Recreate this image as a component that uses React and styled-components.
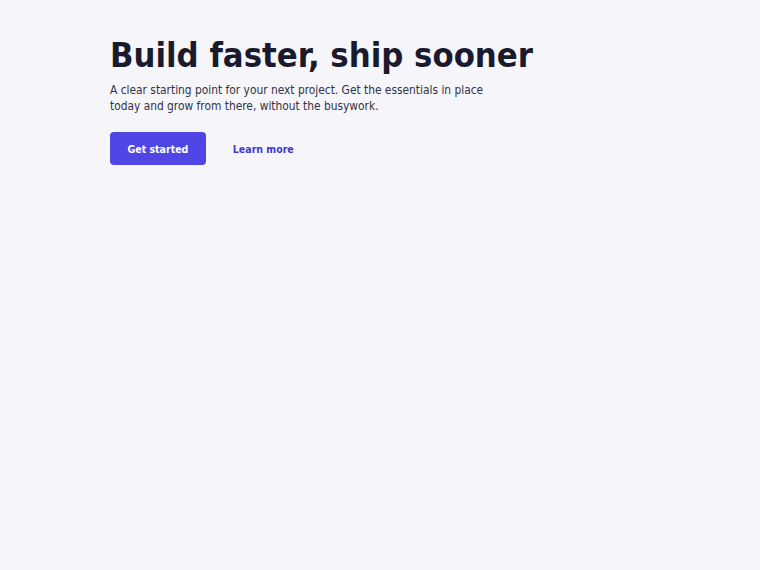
import React from "react";
import styled, { createGlobalStyle } from "styled-components";

const GlobalStyle = createGlobalStyle`
    html, body {
        margin: 0;
        padding: 0;
        background: #f5f5fa;
        font-family: "DejaVu Sans Condensed", "DejaVu Sans", sans-serif;
    }
`

const Page = styled.div`
    min-height: 100vh;
    background: #f5f5fa;
`

const Hero = styled.section`
    padding: 35px 110px;
`

const Title = styled.h1`
    margin: 0;
    font-size: 34.3px;
    line-height: 40px;
    font-weight: 700;
    color: #1a1a2e;
`

const Lead = styled.p`
    margin: 7px 0 0;
    max-width: 390px;
    font-size: 11.85px;
    line-height: 16px;
    color: #333344;
`

const Actions = styled.div`
    display: flex;
    align-items: center;
    gap: 27px;
    margin-top: 18px;
`

const Button = styled.a`
    display: inline-flex;
    align-items: center;
    justify-content: center;
    height: 33px;
    padding: 0 ${(p) => (p.$primary ? "17.5px" : "0")};
    border-radius: 4px;
    background: ${(p) => (p.$primary ? "#4f46e5" : "transparent")};
    color: ${(p) => (p.$primary ? "#ffffff" : "#4338ca")};
    font-size: 10.5px;
    font-weight: 700;
    text-decoration: none;
    cursor: pointer;
`

const App = () => {
    return (
        <>
        <GlobalStyle />
        <Page>
            <Hero>
                <Title>Build faster, ship sooner</Title>
                <Lead>
                    A clear starting point for your next project. Get the essentials in place
                    today and grow from there, without the busywork.
                </Lead>
                <Actions>
                    <Button $primary href="#">Get started</Button>
                    <Button href="#">Learn more</Button>
                </Actions>
            </Hero>
        </Page>
        </>
    )
}

export default App;
